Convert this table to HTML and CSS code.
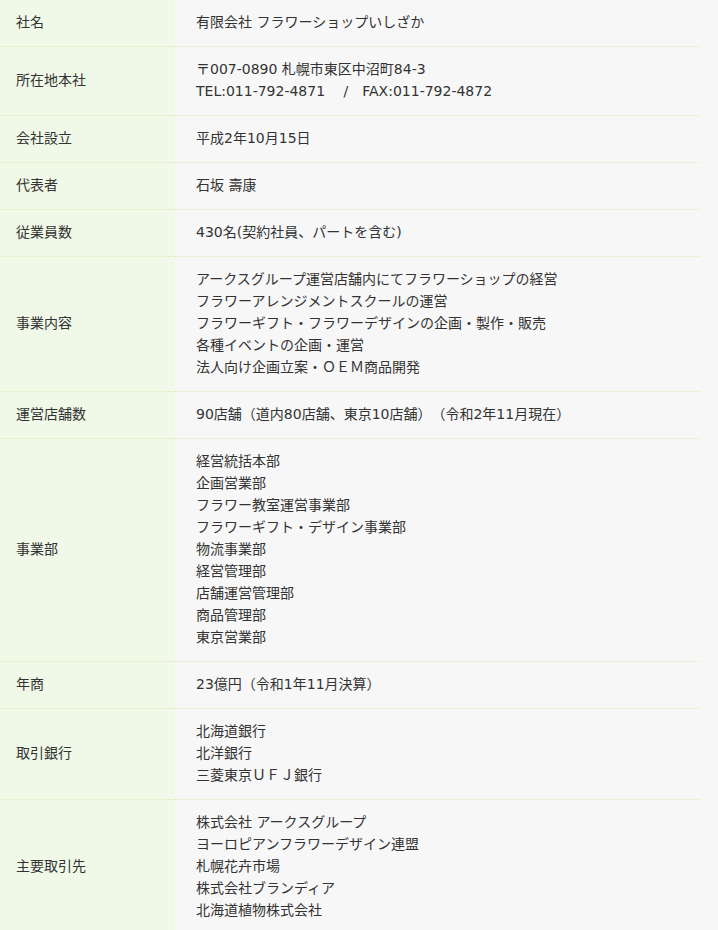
FILE: index.html
```html
<!DOCTYPE html>
<html lang="ja">
<head>
<meta charset="utf-8">
<link rel="stylesheet" href="styles.css">
</head>
<body>
<table class="info">
<tr><th>社名</th><td>有限会社 フラワーショップいしざか</td></tr>
<tr><th>所在地本社</th><td>〒007-0890 札幌市東区中沼町84-3<br>TEL:011-792-4871　 /　FAX:011-792-4872</td></tr>
<tr><th>会社設立</th><td>平成2年10月15日</td></tr>
<tr><th>代表者</th><td>石坂 壽康</td></tr>
<tr><th>従業員数</th><td>430名(契約社員、パートを含む)</td></tr>
<tr><th>事業内容</th><td>アークスグループ運営店舗内にてフラワーショップの経営<br>フラワーアレンジメントスクールの運営<br>フラワーギフト・フラワーデザインの企画・製作・販売<br>各種イベントの企画・運営<br>法人向け企画立案・ＯＥＭ商品開発</td></tr>
<tr><th>運営店舗数</th><td>90店舗（道内80店舗、東京10店舗）（令和2年11月現在）</td></tr>
<tr><th>事業部</th><td>経営統括本部<br>企画営業部<br>フラワー教室運営事業部<br>フラワーギフト・デザイン事業部<br>物流事業部<br>経営管理部<br>店舗運営管理部<br>商品管理部<br>東京営業部</td></tr>
<tr><th>年商</th><td>23億円（令和1年11月決算）</td></tr>
<tr><th>取引銀行</th><td>北海道銀行<br>北洋銀行<br>三菱東京ＵＦＪ銀行</td></tr>
<tr><th>主要取引先</th><td>株式会社 アークスグループ<br>ヨーロピアンフラワーデザイン連盟<br>札幌花卉市場<br>株式会社ブランディア<br>北海道植物株式会社</td></tr>
</table>
</body>
</html>
```
FILE: styles.css
```css
html, body {
  margin: 0;
  padding: 0;
  background: #f7f7f7;
}
body {
  font-family: "DejaVu Sans", "Noto Sans CJK JP", sans-serif;
  font-size: 14px;
  line-height: 22px;
  color: #333;
  text-spacing-trim: space-all;
}
.info {
  width: 700px;
  border-collapse: collapse;
  border-spacing: 0;
}
.info th,
.info td {
  padding: 11px 0 13px;
  border-bottom: 1px dotted #dfe6b9;
  text-align: left;
  vertical-align: middle;
  font-weight: normal;
}
.info th {
  width: 159px;
  padding-left: 16px;
  background: #f0f8e7;
}
.info td {
  padding-left: 21px;
  background: #f7f7f7;
}
```
